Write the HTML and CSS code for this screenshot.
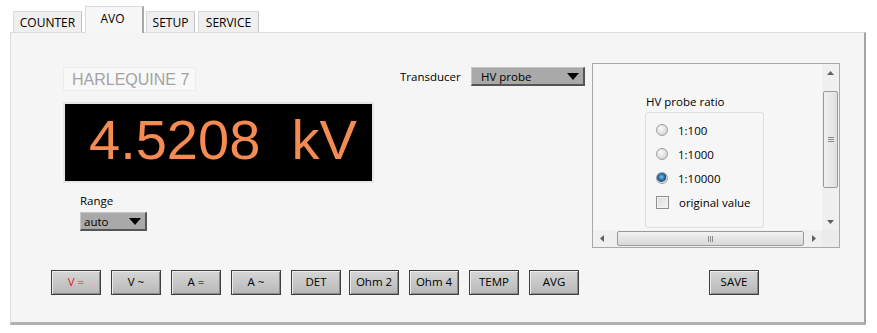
FILE: index.html
```html
<!DOCTYPE html>
<html dir="ltr" lang="en">
<head>
	<title>AVO</title>
	<meta http-equiv="content-type" content="text/html; charset=utf-8" />
	<link rel="stylesheet" href="styles.css">
</head>
<body>
	<div id="tabs">
		<div class="tab t-counter">COUNTER</div>
		<div class="tab active">AVO</div>
		<div class="tab t-setup">SETUP</div>
		<div class="tab t-service">SERVICE</div>
	</div>
	<div id="panel">
		<div id="top">
			<div id="meter">
				<div id="device">HARLEQUINE 7</div>
				<div id="display">4.5208&nbsp;&nbsp;kV</div>
				<div id="range">
					<div class="label">Range</div>
					<div class="ring small"><span>auto</span><i class="tri"></i></div>
				</div>
			</div>
			<div id="transducer">
				<span class="label">Transducer</span>
				<div class="ring wide"><span>HV probe</span><i class="tri"></i></div>
			</div>
			<div id="scrollbox">
				<div id="content">
					<div class="label">HV probe ratio</div>
					<div id="group">
						<div class="opt"><i class="radio"></i>1:100</div>
						<div class="opt"><i class="radio"></i>1:1000</div>
						<div class="opt"><i class="radio on"></i>1:10000</div>
						<div class="opt"><i class="check"></i>original value</div>
					</div>
				</div>
				<div class="vbar">
					<div class="arrow"><svg width="7" height="4"><path d="M0 4 L3.5 0 L7 4 Z" fill="#606060"/></svg></div>
					<div class="vtrack">
						<div class="vthumb"><svg width="6" height="6"><path d="M0 0.5 H6 M0 2.5 H6 M0 4.5 H6" stroke="#8a8a8a"/></svg></div>
					</div>
					<div class="arrow"><svg width="7" height="4"><path d="M0 0 L3.5 4 L7 0 Z" fill="#606060"/></svg></div>
				</div>
				<div class="hbar">
					<div class="arrow"><svg width="4" height="7"><path d="M4 0 L0 3.5 L4 7 Z" fill="#606060"/></svg></div>
					<div class="htrack">
						<div class="hthumb"><svg width="6" height="6"><path d="M0.5 0 V6 M2.5 0 V6 M4.5 0 V6" stroke="#8a8a8a"/></svg></div>
					</div>
					<div class="arrow"><svg width="4" height="7"><path d="M0 0 L4 3.5 L0 7 Z" fill="#606060"/></svg></div>
				</div>
				<div class="corner"></div>
			</div>
		</div>
		<div id="buttons">
			<div class="btn red">V =</div>
			<div class="btn">V ~</div>
			<div class="btn">A =</div>
			<div class="btn">A ~</div>
			<div class="btn">DET</div>
			<div class="btn ohm">Ohm 2</div>
			<div class="btn">Ohm 4</div>
			<div class="btn">TEMP</div>
			<div class="btn">AVG</div>
			<div class="btn save">SAVE</div>
		</div>
	</div>
</body>
</html>
```
FILE: styles.css
```css
html, body { margin: 0; background-color: #fff; }
body { font-family: "Open Sans", sans-serif; font-size: 11.5px; color: #000; }

#tabs { display: flex; align-items: flex-end; height: 32px; padding-left: 13px; }
.tab { height: 21px; line-height: 21px; box-sizing: border-box; text-align: center; font-size: 12px; margin-right: 3px; background: #efefef; border: 1px solid #dadada; border-bottom: none; border-right: 1px solid #c4c4c4; }
.t-counter { width: 69px; }
.t-setup { width: 49px; }
.t-service { width: 61px; }
.tab.active { width: 59px; height: 27px; line-height: 24px; margin-right: 2px; padding-right: 3px; background: #f7f7f7; border-right: 2px solid #a8a8a8; position: relative; z-index: 1; margin-bottom: -1px; }

#panel { margin-left: 10px; width: 856px; height: 293px; box-sizing: border-box; background: #f5f5f5; border: 1px solid #dcdcdc; border-right: 2px solid #a4a4a4; border-bottom: 3px solid #b0b0b0; }

#top { display: flex; height: 237px; padding-left: 51px; }

#meter { width: 311px; padding-top: 34px; }
#device { width: 133px; height: 24px; line-height: 24px; margin-left: 1px; padding-left: 8px; box-sizing: border-box; background: #f8f8f8; border: 1px solid #ececec; font-family: "Liberation Sans", sans-serif; font-size: 16px; color: #a3a3a3; }
#display { margin-top: 11px; margin-left: 1px; width: 283px; height: 77px; line-height: 71px; padding-left: 24px; background: #000; border: 2px solid #e6e6e6; font-family: "Liberation Sans", sans-serif; font-size: 56px; color: #f48b52; white-space: nowrap; }
#range { margin-left: 18px; margin-top: 10px; }
#range .label { line-height: 16px; margin-bottom: 3px; }

.ring { display: flex; align-items: center; justify-content: space-between; height: 19px; box-sizing: border-box; background: #a9a9a9; border-top: 1px solid #c6c6c6; border-left: 1px solid #c6c6c6; border-right: 2px solid #555; border-bottom: 2px solid #555; padding: 0 4px 0 3px; }
.ring.small { width: 67px; }
.ring.wide { width: 114px; padding-left: 9px; }
.tri { width: 0; height: 0; border-left: 6px solid transparent; border-right: 6px solid transparent; border-top: 7px solid #000; }

#transducer { display: flex; align-items: center; height: 19px; margin-top: 34px; margin-left: 27px; }
#transducer .label { width: 71px; }

#scrollbox { display: grid; grid-template-columns: 1fr 17px; grid-template-rows: 1fr 17px; width: 248px; height: 185px; box-sizing: border-box; margin-top: 30px; margin-left: 7px; background: #f7f7f7; border: 1px solid #a9a9a9; }
#content { padding: 30px 0 0 53px; overflow: hidden; }
#content .label { line-height: 16px; margin-bottom: 2px; }
#group { width: 119px; height: 116px; box-sizing: border-box; margin-left: -1px; padding: 5px 0 0 10px; border: 1px solid #dedede; border-radius: 3px; background: #f6f6f6; }
.opt { display: flex; align-items: center; height: 24px; }
.radio { width: 12px; height: 12px; box-sizing: border-box; border: 1px solid #a0a0a0; border-radius: 50%; margin-right: 10px; background: radial-gradient(circle at 40% 35%, #fafafa 0, #dcdcdc 60%, #c8c8c8 100%); }
.radio.on { background: radial-gradient(circle at 45% 40%, #7fc3e8 0, #2a78b0 35%, #1b4d78 55%, #d8d8d8 62%, #e8e8e8 100%); }
.check { width: 13px; height: 13px; box-sizing: border-box; border: 1px solid #8e8f8f; margin-right: 10px; background: linear-gradient(135deg, #dcdcdc, #f2f2f2); box-shadow: inset 0 0 0 1px #f4f4f4; }

.vbar { display: flex; flex-direction: column; background: #f0f0f0; }
.hbar { display: flex; background: #f0f0f0; }
.arrow { display: flex; align-items: center; justify-content: center; flex: 0 0 17px; height: 17px; }
.vtrack { flex: 1; padding: 10px 0 0 1px; }
.vthumb { display: flex; align-items: center; justify-content: center; width: 15px; height: 97px; box-sizing: border-box; border: 1px solid #9a9a9a; border-radius: 2px; background: linear-gradient(to right, #f2f2f2, #dedede); }
.htrack { flex: 1; padding: 1px 0 0 7px; }
.hthumb { display: flex; align-items: center; justify-content: center; width: 187px; height: 15px; box-sizing: border-box; border: 1px solid #9a9a9a; border-radius: 2px; background: linear-gradient(#f2f2f2, #d8d8d8); }
.corner { background: #ebebeb; }

#buttons { display: flex; gap: 10px; padding-left: 40px; }
.btn { width: 50px; height: 25px; line-height: 22px; box-sizing: border-box; text-align: center; border: 1px solid #3f3f3f; background: linear-gradient(#d6d6d6, #c4c4c4 60%, #b6b6b6); box-shadow: inset 1px 1px 0 #ececec, inset -1px -1px 0 #8a8a8a; }
.btn.red { color: #e02020; }
.btn.ohm { margin-left: -2px; }
.btn.save { margin-left: 120px; }
```
